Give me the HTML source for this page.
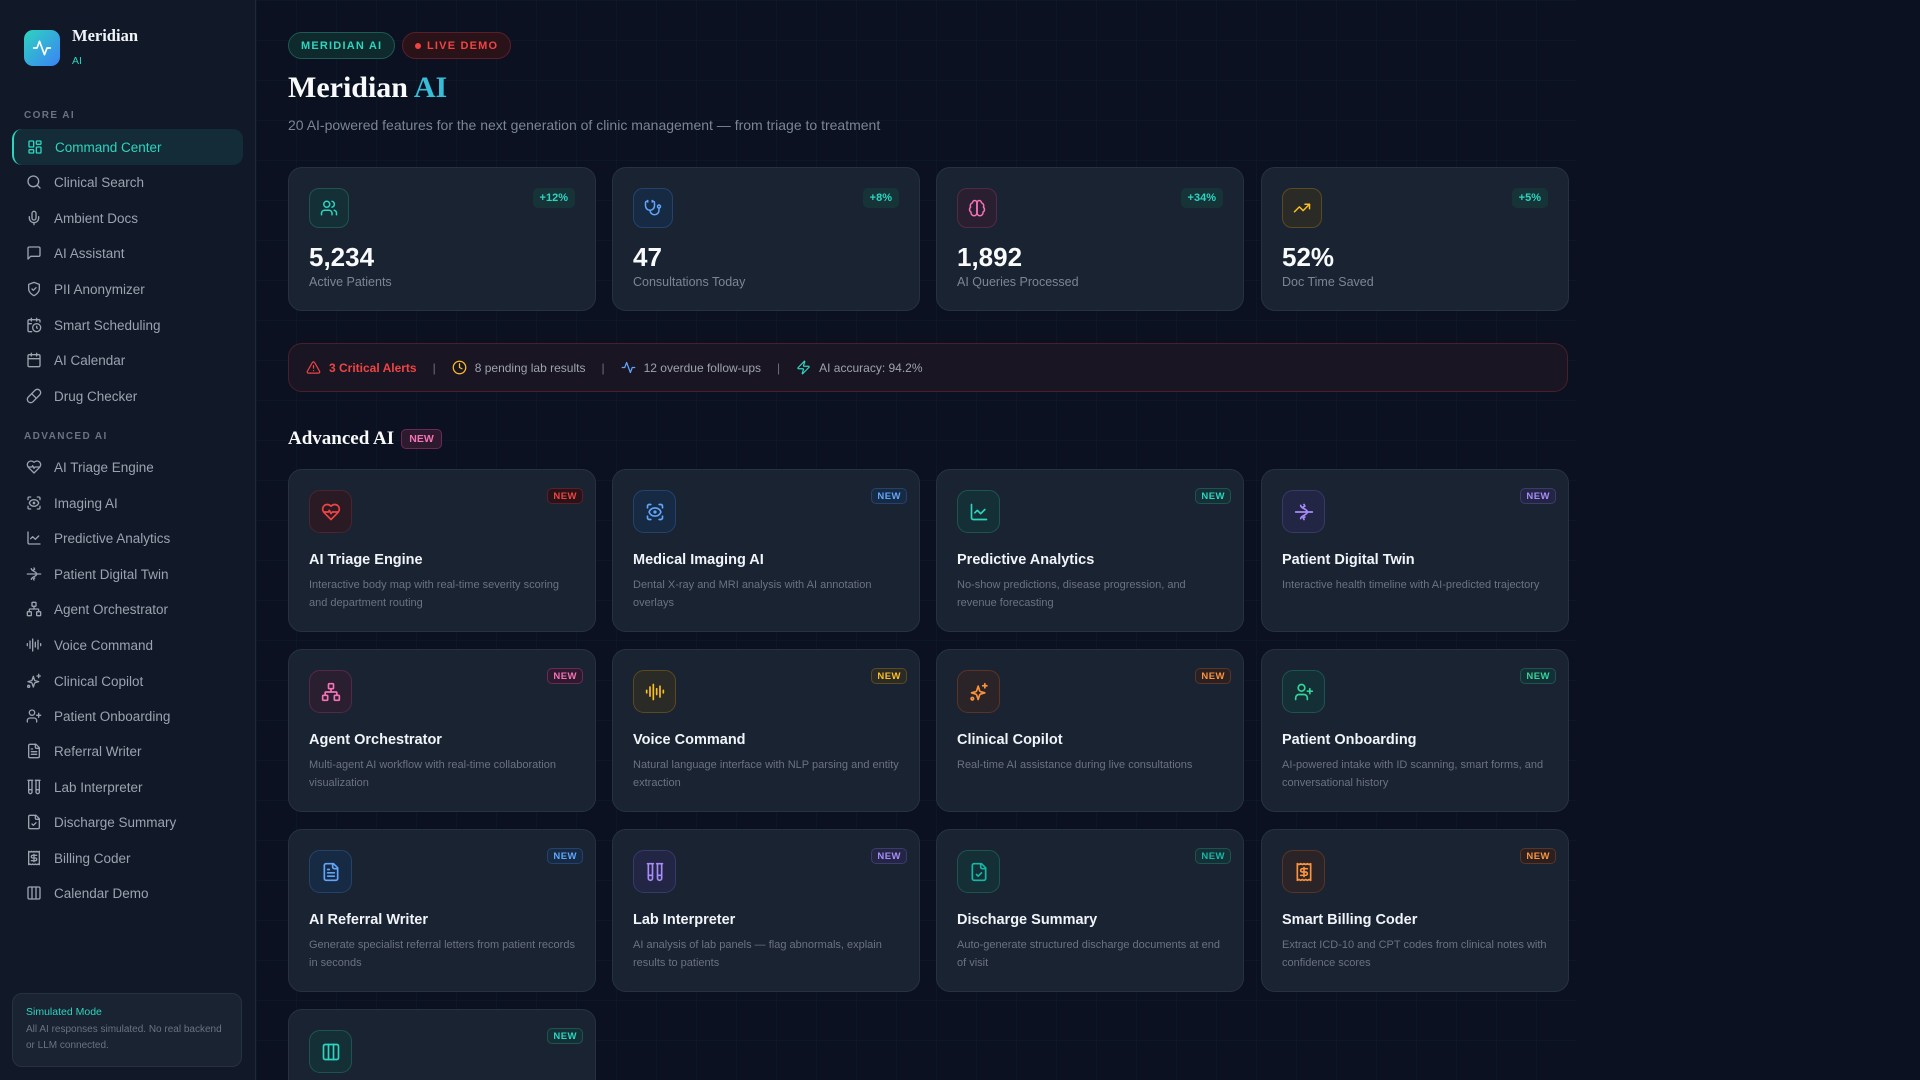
<!DOCTYPE html>
<html><head><meta charset="utf-8"><style>
*{box-sizing:border-box;margin:0;padding:0}
html,body{width:1920px;height:1080px;overflow:hidden}
body{background:#0b1120;font-family:"Liberation Sans",sans-serif}
#root{position:relative;width:1920px;height:1080px;overflow:hidden;background:#0b1120}
.grid{position:absolute;left:256px;top:0;width:1320px;height:1080px;background-image:linear-gradient(rgba(45,212,191,0.035) 1px,transparent 1px),linear-gradient(90deg,rgba(45,212,191,0.035) 1px,transparent 1px);background-size:40px 40px}
.side{position:absolute;left:0;top:0;width:256px;height:1080px;background:#111827;border-right:1px solid #1f2937}
.logo{position:absolute;left:24px;top:30px;width:36px;height:36px;border-radius:9px;background:linear-gradient(135deg,#2dd4bf,#3b82f6);display:flex;align-items:center;justify-content:center}
.brand{position:absolute;left:72px;top:26px;font-family:"Liberation Serif",serif;font-weight:bold;font-size:16.5px;color:#f1f5f9}
.brand2{position:absolute;left:72px;top:55px;font-size:10.5px;color:#2dd4bf}
.sec{position:absolute;left:24px;font-size:10px;letter-spacing:1.4px;color:#6b7280;font-weight:bold}
.it{position:absolute;left:12px;width:231px;height:36px;border-radius:10px;display:flex;align-items:center;padding-left:14px;font-size:13.5px;color:#9ca3af}
.it svg{width:16px;height:16px;margin-right:12px;flex:none}
.it.act{background:#132c37;color:#2dd4bf;border-left:2px solid #2dd4bf;padding-left:13px}
.sim{position:absolute;left:12px;top:993px;width:230px;height:74px;border-radius:10px;background:#1a2332;border:1px solid #263244;padding:12px 13px}
.sim b{display:block;font-weight:normal;font-size:10.5px;color:#2dd4bf;margin-bottom:4px}
.sim p{font-size:10px;line-height:16px;color:#6b7280}
.pill{position:absolute;top:32px;height:27px;border-radius:14px;font-size:11px;font-weight:bold;letter-spacing:1.2px;display:flex;align-items:center;padding:0 12px}
h1{position:absolute;left:288px;top:71px;font-family:"Liberation Serif",serif;font-weight:bold;font-size:30px;color:#f8fafc}
.sub{position:absolute;left:288px;top:117px;font-size:14px;color:#7b8596}
.card{position:absolute;width:308px;background:#1a2332;border:1px solid #263244;border-radius:14px}
.sc{height:144px;top:167px}
.ib{position:absolute;left:20px;top:20px;width:40px;height:40px;border-radius:10px;display:flex;align-items:center;justify-content:center;border:1px solid}
.ib svg{width:18px;height:18px}
.pct{position:absolute;right:20px;top:20px;height:20px;padding:0 7px;border-radius:5px;background:#163338;color:#2dd4bf;font-size:11px;font-weight:bold;display:flex;align-items:center}
.num{position:absolute;left:20px;top:74px;font-size:26px;font-weight:bold;color:#f8fafc}
.lab{position:absolute;left:20px;top:107px;font-size:12.5px;color:#7b8596}
.alert{position:absolute;left:288px;top:343px;width:1280px;height:49px;border-radius:14px;background:#1a1522;border:1px solid #4a1f2a;display:flex;align-items:center;padding-left:17px;font-size:12px;color:#9ca3af}
.alert svg{width:15px;height:15px;margin-right:8px}
.alert .sep{margin:0 16px;color:#6b7280}
h2{position:absolute;left:288px;top:428px;font-family:"Liberation Serif",serif;font-weight:bold;font-size:19px;color:#f8fafc}
.fc{height:163px}
.fc .ib{width:43px;height:43px;top:20px;border-radius:11px}
.fc .ib svg{width:20px;height:20px}
.nw{position:absolute;right:12px;top:18px;height:16px;padding:0 5px;border-radius:5px;font-size:9.5px;font-weight:bold;letter-spacing:.5px;display:flex;align-items:center;border:1px solid}
.ft{position:absolute;left:20px;top:82px;font-size:14.5px;font-weight:bold;color:#f1f5f9}
.fd{position:absolute;left:20px;top:106px;right:18px;font-size:11px;line-height:18px;color:#6b7280}
svg{fill:none;stroke:currentColor;stroke-width:2;stroke-linecap:round;stroke-linejoin:round}
</style></head><body><div id="root">
<div class="grid"></div>
<div class="side">
<div class="logo"><svg width="20" height="20" viewBox="0 0 24 24" style="color:#fff"><path d="M22 12h-4l-3 8L9 4l-3 8H2"/></svg></div>
<div class="brand">Meridian</div><div class="brand2">AI</div>
<div class="sec" style="top:110px">CORE AI</div>
<div class="it act" style="top:129px"><svg viewBox="0 0 24 24"><rect x="3" y="3" width="7" height="9" rx="1"/><rect x="14" y="3" width="7" height="5" rx="1"/><rect x="14" y="12" width="7" height="9" rx="1"/><rect x="3" y="16" width="7" height="5" rx="1"/></svg>Command Center</div>
<div class="it" style="top:164px"><svg viewBox="0 0 24 24"><circle cx="11" cy="11" r="8"/><path d="m21 21-4.3-4.3"/></svg>Clinical Search</div>
<div class="it" style="top:200px"><svg viewBox="0 0 24 24"><rect x="9" y="2" width="6" height="13" rx="3"/><path d="M19 10v2a7 7 0 0 1-14 0v-2M12 19v3"/></svg>Ambient Docs</div>
<div class="it" style="top:235px"><svg viewBox="0 0 24 24"><path d="M21 15a2 2 0 0 1-2 2H7l-4 4V5a2 2 0 0 1 2-2h14a2 2 0 0 1 2 2z"/></svg>AI Assistant</div>
<div class="it" style="top:271px"><svg viewBox="0 0 24 24"><path d="M12 22s8-4 8-10V5l-8-3-8 3v7c0 6 8 10 8 10z"/><path d="m9 12 2 2 4-4"/></svg>PII Anonymizer</div>
<div class="it" style="top:307px"><svg viewBox="0 0 24 24"><path d="M21 7.5V6a2 2 0 0 0-2-2H5a2 2 0 0 0-2 2v14a2 2 0 0 0 2 2h3.5M16 2v4M8 2v4M3 10h5"/><circle cx="16" cy="16" r="6"/><path d="M16 14v2l1 1"/></svg>Smart Scheduling</div>
<div class="it" style="top:342px"><svg viewBox="0 0 24 24"><rect x="3" y="4" width="18" height="18" rx="2"/><path d="M16 2v4M8 2v4M3 10h18"/></svg>AI Calendar</div>
<div class="it" style="top:378px"><svg viewBox="0 0 24 24"><path d="m10.5 20.5 10-10a4.95 4.95 0 1 0-7-7l-10 10a4.95 4.95 0 1 0 7 7ZM8.5 8.5l7 7"/></svg>Drug Checker</div>
<div class="sec" style="top:431px">ADVANCED AI</div>
<div class="it" style="top:449px"><svg viewBox="0 0 24 24"><path d="M19 14c1.5-1.5 3-3.2 3-5.5A5.5 5.5 0 0 0 16.5 3c-1.8 0-3 .5-4.5 2-1.5-1.5-2.7-2-4.5-2A5.5 5.5 0 0 0 2 8.5c0 2.3 1.5 4 3 5.5l7 7Z"/><path d="M3.2 12H9l1-2 2 4 1.5-2h7.3"/></svg>AI Triage Engine</div>
<div class="it" style="top:485px"><svg viewBox="0 0 24 24"><path d="M3 7V5a2 2 0 0 1 2-2h2M17 3h2a2 2 0 0 1 2 2v2M21 17v2a2 2 0 0 1-2 2h-2M7 21H5a2 2 0 0 1-2-2v-2"/><circle cx="12" cy="12" r="1"/><path d="M18.9 12.5a7.6 7.6 0 0 1-13.8 0 .9.9 0 0 1 0-1 7.6 7.6 0 0 1 13.8 0 .9.9 0 0 1 0 1"/></svg>Imaging AI</div>
<div class="it" style="top:520px"><svg viewBox="0 0 24 24"><path d="M3 3v16a2 2 0 0 0 2 2h16"/><path d="m19 9-5 5-4-4-3 3"/></svg>Predictive Analytics</div>
<div class="it" style="top:556px"><svg viewBox="0 0 24 24"><path d="M2 12h20M8 20c0-4 8-4 8-8M8 4c0 4 8 4 8 8M12 3l1 2-2 1M12 21l-1-2 2-1"/></svg>Patient Digital Twin</div>
<div class="it" style="top:591px"><svg viewBox="0 0 24 24"><rect x="16" y="16" width="6" height="6" rx="1"/><rect x="2" y="16" width="6" height="6" rx="1"/><rect x="9" y="2" width="6" height="6" rx="1"/><path d="M5 16v-3a1 1 0 0 1 1-1h12a1 1 0 0 1 1 1v3M12 12V8"/></svg>Agent Orchestrator</div>
<div class="it" style="top:627px"><svg viewBox="0 0 24 24"><path d="M2 10v3M6 6v11M10 3v18M14 8v7M18 5v13M22 10v3"/></svg>Voice Command</div>
<div class="it" style="top:663px"><svg viewBox="0 0 24 24"><path d="m11 5-1.7 5.3a2 2 0 0 1-1.3 1.3L3 13l5 1.5a2 2 0 0 1 1.3 1.3L11 21l1.7-5.2a2 2 0 0 1 1.3-1.3L19 13l-5-1.4a2 2 0 0 1-1.3-1.3Z"/><path d="M19 2v5M21.5 4.5h-5"/><circle cx="4" cy="20" r="1.5"/></svg>Clinical Copilot</div>
<div class="it" style="top:698px"><svg viewBox="0 0 24 24"><path d="M16 21v-2a4 4 0 0 0-4-4H6a4 4 0 0 0-4 4v2"/><circle cx="9" cy="7" r="4"/><path d="M19 8v6M22 11h-6"/></svg>Patient Onboarding</div>
<div class="it" style="top:733px"><svg viewBox="0 0 24 24"><path d="M15 2H6a2 2 0 0 0-2 2v16a2 2 0 0 0 2 2h12a2 2 0 0 0 2-2V7Z"/><path d="M14 2v4a2 2 0 0 0 2 2h4M10 9H8M16 13H8M16 17H8"/></svg>Referral Writer</div>
<div class="it" style="top:769px"><svg viewBox="0 0 24 24"><path d="M9 2v17.5A2.5 2.5 0 0 1 4 19.5V2M20 2v17.5a2.5 2.5 0 0 1-5 0V2M3 2h7M14 2h7M9 16H4M20 16h-5"/></svg>Lab Interpreter</div>
<div class="it" style="top:804px"><svg viewBox="0 0 24 24"><path d="M15 2H6a2 2 0 0 0-2 2v16a2 2 0 0 0 2 2h12a2 2 0 0 0 2-2V7Z"/><path d="M14 2v4a2 2 0 0 0 2 2h4M9 15l2 2 4-4"/></svg>Discharge Summary</div>
<div class="it" style="top:840px"><svg viewBox="0 0 24 24"><path d="M4 2v20l2-1 2 1 2-1 2 1 2-1 2 1 2-1 2 1V2l-2 1-2-1-2 1-2-1-2 1-2-1-2 1Z"/><path d="M16 8h-6a2 2 0 1 0 0 4h4a2 2 0 1 1 0 4H8M12 17.5v-11"/></svg>Billing Coder</div>
<div class="it" style="top:875px"><svg viewBox="0 0 24 24"><rect x="3" y="3" width="18" height="18" rx="2"/><path d="M9 3v18M15 3v18"/></svg>Calendar Demo</div>
<div class="sim"><b>Simulated Mode</b><p>All AI responses simulated. No real backend or LLM connected.</p></div>
</div>

<div class="pill" style="left:288px;background:#0f2a2c;border:1px solid #1c5a55;color:#2dd4bf">MERIDIAN AI</div>
<div class="pill" style="left:402px;background:#2a1219;border:1px solid #5c1f29;color:#ef4444"><span style="width:6px;height:6px;border-radius:3px;background:#ef4444;margin-right:6px"></span>LIVE DEMO</div>
<h1>Meridian <span style="color:#38bdd8">AI</span></h1>
<div class="sub">20 AI-powered features for the next generation of clinic management — from triage to treatment</div>

<div class="card sc" style="left:288px"><div class="ib" style="background:#143036;border-color:#1e5450;color:#2dd4bf"><svg viewBox="0 0 24 24"><path d="M16 21v-2a4 4 0 0 0-4-4H6a4 4 0 0 0-4 4v2"/><circle cx="9" cy="7" r="4"/><path d="M22 21v-2a4 4 0 0 0-3-3.9M16 3.1a4 4 0 0 1 0 7.8"/></svg></div><div class="pct">+12%</div><div class="num">5,234</div><div class="lab">Active Patients</div></div>
<div class="card sc" style="left:612px"><div class="ib" style="background:#172a44;border-color:#26426a;color:#60a5fa"><svg viewBox="0 0 24 24"><path d="M11 2v2M5 2v2M5 3H4a2 2 0 0 0-2 2v4a6 6 0 0 0 12 0V5a2 2 0 0 0-2-2h-1"/><path d="M8 15a6 6 0 0 0 12 0v-3"/><circle cx="20" cy="10" r="2"/></svg></div><div class="pct">+8%</div><div class="num">47</div><div class="lab">Consultations Today</div></div>
<div class="card sc" style="left:936px"><div class="ib" style="background:#2a1e31;border-color:#522a48;color:#f472b6"><svg viewBox="0 0 24 24"><path d="M12 5a3 3 0 1 0-6 .1 4 4 0 0 0-2.5 5.8 4 4 0 0 0 .6 6.6A4 4 0 1 0 12 18Z"/><path d="M12 5a3 3 0 1 1 6 .1 4 4 0 0 1 2.5 5.8 4 4 0 0 1-.6 6.6A4 4 0 1 1 12 18Z"/><path d="M12 5v13"/></svg></div><div class="pct">+34%</div><div class="num">1,892</div><div class="lab">AI Queries Processed</div></div>
<div class="card sc" style="left:1261px"><div class="ib" style="background:#2a2a27;border-color:#5a4a1f;color:#fbbf24"><svg viewBox="0 0 24 24"><path d="m22 7-8.5 8.5-5-5L2 17"/><path d="M16 7h6v6"/></svg></div><div class="pct">+5%</div><div class="num">52%</div><div class="lab">Doc Time Saved</div></div>

<div class="alert">
<svg viewBox="0 0 24 24" style="color:#ef4444"><path d="m21.7 18-8-14a2 2 0 0 0-3.5 0l-8 14A2 2 0 0 0 4 21h16a2 2 0 0 0 1.7-3Z"/><path d="M12 9v4M12 17h.01"/></svg><span style="color:#ef4444;font-weight:bold">3 Critical Alerts</span><span class="sep">|</span>
<svg viewBox="0 0 24 24" style="color:#fbbf24"><circle cx="12" cy="12" r="10"/><path d="M12 6v6l4 2"/></svg>8 pending lab results<span class="sep">|</span>
<svg viewBox="0 0 24 24" style="color:#60a5fa"><path d="M22 12h-4l-3 8L9 4l-3 8H2"/></svg>12 overdue follow-ups<span class="sep">|</span>
<svg viewBox="0 0 24 24" style="color:#2dd4bf"><path d="M4 14a1 1 0 0 1-.8-1.6l9.9-10.2a.5.5 0 0 1 .9.5l-1.9 6A1 1 0 0 0 13 10h7a1 1 0 0 1 .8 1.6l-9.9 10.2a.5.5 0 0 1-.9-.5l1.9-6A1 1 0 0 0 11 14z"/></svg>AI accuracy: 94.2%
</div>

<h2>Advanced AI</h2>
<div style="position:absolute;left:401px;top:429px;width:41px;height:20px;border-radius:5px;background:#2e1a2e;border:1px solid #6b2a56;color:#f472b6;font-size:10.5px;font-weight:bold;display:flex;align-items:center;justify-content:center">NEW</div>

<div class="card fc" style="left:288px;top:469px"><div class="ib" style="background:#2a1a24;border-color:#4a2430;color:#ef4444"><svg viewBox="0 0 24 24"><path d="M19 14c1.5-1.5 3-3.2 3-5.5A5.5 5.5 0 0 0 16.5 3c-1.8 0-3 .5-4.5 2-1.5-1.5-2.7-2-4.5-2A5.5 5.5 0 0 0 2 8.5c0 2.3 1.5 4 3 5.5l7 7Z"/><path d="M3.2 12H9l1-2 2 4 1.5-2h7.3"/></svg></div><div class="nw" style="color:#ef4444;border-color:#5c1f29;background:#2a1219">NEW</div><div class="ft">AI Triage Engine</div><div class="fd">Interactive body map with real-time severity scoring and department routing</div></div>
<div class="card fc" style="left:612px;top:469px"><div class="ib" style="background:#172a44;border-color:#26426a;color:#60a5fa"><svg viewBox="0 0 24 24"><path d="M3 7V5a2 2 0 0 1 2-2h2M17 3h2a2 2 0 0 1 2 2v2M21 17v2a2 2 0 0 1-2 2h-2M7 21H5a2 2 0 0 1-2-2v-2"/><circle cx="12" cy="12" r="1"/><path d="M18.9 12.5a7.6 7.6 0 0 1-13.8 0 .9.9 0 0 1 0-1 7.6 7.6 0 0 1 13.8 0 .9.9 0 0 1 0 1"/></svg></div><div class="nw" style="color:#60a5fa;border-color:#26426a;background:#172a44">NEW</div><div class="ft">Medical Imaging AI</div><div class="fd">Dental X-ray and MRI analysis with AI annotation overlays</div></div>
<div class="card fc" style="left:936px;top:469px"><div class="ib" style="background:#143036;border-color:#1e5450;color:#2dd4bf"><svg viewBox="0 0 24 24"><path d="M3 3v16a2 2 0 0 0 2 2h16"/><path d="m19 9-5 5-4-4-3 3"/></svg></div><div class="nw" style="color:#2dd4bf;border-color:#1e5450;background:#143036">NEW</div><div class="ft">Predictive Analytics</div><div class="fd">No-show predictions, disease progression, and revenue forecasting</div></div>
<div class="card fc" style="left:1261px;top:469px"><div class="ib" style="background:#232544;border-color:#363a66;color:#a78bfa"><svg viewBox="0 0 24 24"><path d="M2 12h20M8 20c0-4 8-4 8-8M8 4c0 4 8 4 8 8M12 3l1 2-2 1M12 21l-1-2 2-1"/></svg></div><div class="nw" style="color:#a78bfa;border-color:#3f3a6a;background:#232544">NEW</div><div class="ft">Patient Digital Twin</div><div class="fd">Interactive health timeline with AI-predicted trajectory</div></div>

<div class="card fc" style="left:288px;top:649px"><div class="ib" style="background:#2a1e31;border-color:#522a48;color:#f472b6"><svg viewBox="0 0 24 24"><rect x="16" y="16" width="6" height="6" rx="1"/><rect x="2" y="16" width="6" height="6" rx="1"/><rect x="9" y="2" width="6" height="6" rx="1"/><path d="M5 16v-3a1 1 0 0 1 1-1h12a1 1 0 0 1 1 1v3M12 12V8"/></svg></div><div class="nw" style="color:#f472b6;border-color:#6b2a56;background:#2e1a2e">NEW</div><div class="ft">Agent Orchestrator</div><div class="fd">Multi-agent AI workflow with real-time collaboration visualization</div></div>
<div class="card fc" style="left:612px;top:649px"><div class="ib" style="background:#2a2a27;border-color:#5a4a1f;color:#fbbf24"><svg viewBox="0 0 24 24"><path d="M2 10v3M6 6v11M10 3v18M14 8v7M18 5v13M22 10v3"/></svg></div><div class="nw" style="color:#fbbf24;border-color:#5a4a1f;background:#2a2a27">NEW</div><div class="ft">Voice Command</div><div class="fd">Natural language interface with NLP parsing and entity extraction</div></div>
<div class="card fc" style="left:936px;top:649px"><div class="ib" style="background:#2a2428;border-color:#5a3424;color:#fb923c"><svg viewBox="0 0 24 24"><path d="m11 5-1.7 5.3a2 2 0 0 1-1.3 1.3L3 13l5 1.5a2 2 0 0 1 1.3 1.3L11 21l1.7-5.2a2 2 0 0 1 1.3-1.3L19 13l-5-1.4a2 2 0 0 1-1.3-1.3Z"/><path d="M19 2v5M21.5 4.5h-5"/><circle cx="4" cy="20" r="1.5"/></svg></div><div class="nw" style="color:#fb923c;border-color:#5a3424;background:#2a2022">NEW</div><div class="ft">Clinical Copilot</div><div class="fd">Real-time AI assistance during live consultations</div></div>
<div class="card fc" style="left:1261px;top:649px"><div class="ib" style="background:#143036;border-color:#1e5450;color:#34d399"><svg viewBox="0 0 24 24"><path d="M16 21v-2a4 4 0 0 0-4-4H6a4 4 0 0 0-4 4v2"/><circle cx="9" cy="7" r="4"/><path d="M19 8v6M22 11h-6"/></svg></div><div class="nw" style="color:#34d399;border-color:#1e5450;background:#143036">NEW</div><div class="ft">Patient Onboarding</div><div class="fd">AI-powered intake with ID scanning, smart forms, and conversational history</div></div>

<div class="card fc" style="left:288px;top:829px"><div class="ib" style="background:#172a44;border-color:#26426a;color:#60a5fa"><svg viewBox="0 0 24 24"><path d="M15 2H6a2 2 0 0 0-2 2v16a2 2 0 0 0 2 2h12a2 2 0 0 0 2-2V7Z"/><path d="M14 2v4a2 2 0 0 0 2 2h4M10 9H8M16 13H8M16 17H8"/></svg></div><div class="nw" style="color:#60a5fa;border-color:#26426a;background:#172a44">NEW</div><div class="ft">AI Referral Writer</div><div class="fd">Generate specialist referral letters from patient records in seconds</div></div>
<div class="card fc" style="left:612px;top:829px"><div class="ib" style="background:#232544;border-color:#363a66;color:#a78bfa"><svg viewBox="0 0 24 24"><path d="M9 2v17.5A2.5 2.5 0 0 1 4 19.5V2M20 2v17.5a2.5 2.5 0 0 1-5 0V2M3 2h7M14 2h7M9 16H4M20 16h-5"/></svg></div><div class="nw" style="color:#a78bfa;border-color:#3f3a6a;background:#232544">NEW</div><div class="ft">Lab Interpreter</div><div class="fd">AI analysis of lab panels — flag abnormals, explain results to patients</div></div>
<div class="card fc" style="left:936px;top:829px"><div class="ib" style="background:#143036;border-color:#1e5450;color:#14b8a6"><svg viewBox="0 0 24 24"><path d="M15 2H6a2 2 0 0 0-2 2v16a2 2 0 0 0 2 2h12a2 2 0 0 0 2-2V7Z"/><path d="M14 2v4a2 2 0 0 0 2 2h4M9 15l2 2 4-4"/></svg></div><div class="nw" style="color:#14b8a6;border-color:#1e5450;background:#143036">NEW</div><div class="ft">Discharge Summary</div><div class="fd">Auto-generate structured discharge documents at end of visit</div></div>
<div class="card fc" style="left:1261px;top:829px"><div class="ib" style="background:#2a2428;border-color:#5a3424;color:#fb923c"><svg viewBox="0 0 24 24"><path d="M4 2v20l2-1 2 1 2-1 2 1 2-1 2 1 2-1 2 1V2l-2 1-2-1-2 1-2-1-2 1-2-1-2 1Z"/><path d="M16 8h-6a2 2 0 1 0 0 4h4a2 2 0 1 1 0 4H8M12 17.5v-11"/></svg></div><div class="nw" style="color:#fb923c;border-color:#5a3424;background:#2a2022">NEW</div><div class="ft">Smart Billing Coder</div><div class="fd">Extract ICD-10 and CPT codes from clinical notes with confidence scores</div></div>

<div class="card fc" style="left:288px;top:1009px"><div class="ib" style="background:#143036;border-color:#1e5450;color:#2dd4bf"><svg viewBox="0 0 24 24"><rect x="3" y="3" width="18" height="18" rx="2"/><path d="M9 3v18M15 3v18"/></svg></div><div class="nw" style="color:#2dd4bf;border-color:#1e5450;background:#143036">NEW</div><div class="ft">Calendar Demo</div></div>
</div></body></html>
